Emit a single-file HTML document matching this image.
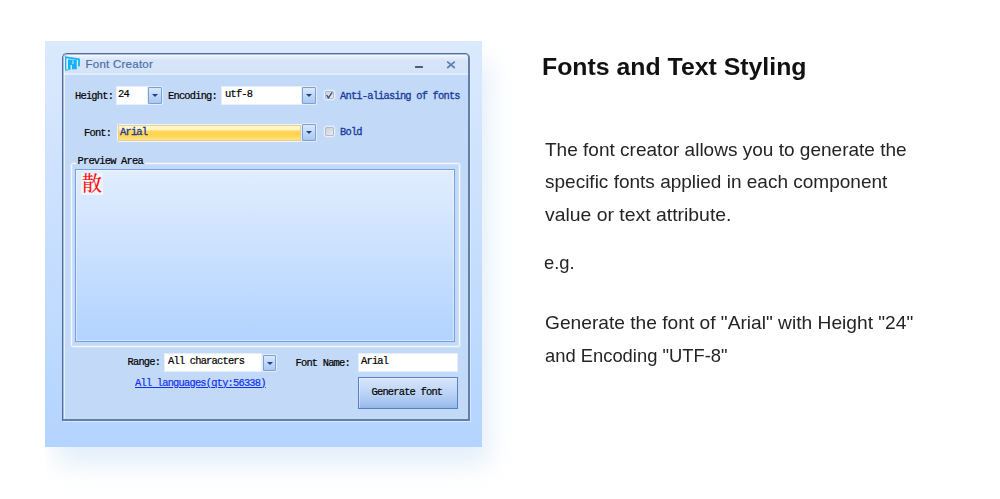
<!DOCTYPE html>
<html lang="en">
<head>
<meta charset="utf-8">
<title>Fonts and Text Styling</title>
<style>
html,body{margin:0;padding:0;background:#fff;}
body{width:1000px;height:499px;position:relative;overflow:hidden;font-family:"Liberation Sans",sans-serif;}
.abs{position:absolute;}
/* outer panel */
#shadow{left:56px;top:62px;width:433px;height:402px;background:#c6dff5;filter:blur(13px);opacity:.52;clip-path:inset(-60px -60px -60px -10px);}
#panel{left:45px;top:41px;width:437px;height:405.5px;background:linear-gradient(#dbe9fd,#b3d4ff);}
/* window */
#win{left:62px;top:53px;width:408px;height:368px;box-sizing:border-box;border-radius:5px 5px 0 0;background:#c3d9f8;overflow:hidden;}
#frame{left:62px;top:53px;width:408px;height:368px;box-sizing:border-box;border:solid #4f6c9b;border-width:1px 2px 2px 1px;border-color:#4f6c9b #627eaa #627eaa #4f6c9b;border-radius:5px 5px 0 0;box-shadow:1px 1px 0 rgba(226,238,253,.75),inset 1px 1px 0 rgba(79,108,155,.4),inset 2px 2px 0 rgba(240,246,254,.8);}
#title{left:0;top:0;width:408px;height:21.5px;background:linear-gradient(#fff 0,#fff 3px,#e4edfb 3.6px,#e1ebfb 5.5px,#d7e4f9 7px,#d5e3f9 19.5px,#e0edfd 20px,#e0edfd 21.5px);}
#ttext{left:85.5px;top:57px;letter-spacing:.25px;font-size:11.5px;line-height:14px;color:#4a6ea8;white-space:nowrap;-webkit-text-stroke:.2px #4a6ea8;}
.m{font-family:"Liberation Mono","DejaVu Sans Mono",monospace;font-size:10.4px;letter-spacing:-.79px;line-height:10px;white-space:nowrap;color:#000;-webkit-text-stroke:.2px currentColor;margin-top:-1px;}
.inp{background:#fff;border:1px solid #e6effb;box-sizing:border-box;}
.dd{box-sizing:border-box;box-shadow:0 0 0 1px rgba(228,238,251,.95);border:1px solid #7f9fd0;background:linear-gradient(#d9e8fb,#a9c8f2);border-radius:1px;}
.dd:after{content:"";position:absolute;left:2.5px;top:6px;border:3.5px solid transparent;border-top:3.5px solid #1b418f;border-bottom:0;}
.cb{box-sizing:border-box;width:11.6px;height:10.6px;border:1px solid #e9f0fa;border-radius:2.5px;box-shadow:0 0 0 .5px rgba(233,240,250,.6),inset 0 0 0 1px #aebace;background:linear-gradient(135deg,#c9ced8,#eceef2);}
/* right side */
#h1{left:541.5px;top:51.7px;font-weight:bold;font-size:23.5px;line-height:30px;color:#111;white-space:nowrap;transform-origin:0 0;transform:scaleX(1.057);}
.p{left:545px;font-size:18.2px;line-height:33px;color:#242424;white-space:nowrap;transform-origin:0 0;transform:scaleX(1.085);}
</style>
</head>
<body>
<div id="shadow" class="abs"></div>
<div id="panel" class="abs"></div>
<div id="win" class="abs">
  <div id="title" class="abs"></div>
</div>
<div id="frame" class="abs"></div>
<svg class="abs" style="left:64px;top:55px" width="18" height="17" viewBox="0 0 18 17">
  <path d="M1 1.2 L15.9 3.5 L15.9 11.3 L14.1 11.3 L14.1 4.9 L2.4 3.3 L2.4 14.4 L4 14.4 L4 15.5 L1 15.5 Z" fill="#10b4f6"/>
  <path d="M4 4.6 L12.8 5 L12.8 14.3 L8 14.3 L8 10 L6.5 10 L6.5 14.7 L4 14.7 Z" fill="#10b4f6"/>
  <rect x="8.4" y="5.4" width="1.1" height="3.6" fill="#bfe8fc"/>
  <rect x="2.4" y="3.9" width="1.6" height="10.5" fill="#d9f0fd" opacity=".55"/>
  <rect x="12.8" y="5" width="1.3" height="6.3" fill="#d9f0fd" opacity=".45"/>
</svg>
<div id="ttext" class="abs">Font Creator</div>
<div class="abs" style="left:414.5px;top:66px;width:8px;height:2px;background:#4b5c7c;border-radius:.5px"></div>
<svg class="abs" style="left:445px;top:59px" width="12" height="11" viewBox="0 0 12 11"><path d="M2.2 2.6 L9.8 9 M9.8 2.6 L2.2 9" fill="none" stroke="#5c7fb4" stroke-width="1.7"/></svg>

<!-- row 1 -->
<div class="abs m" style="left:75px;top:92px">Height:</div>
<div class="abs inp" style="left:116px;top:86px;width:32px;height:19px"></div>
<div class="abs m" style="left:118px;top:90px">24</div>
<div class="abs dd" style="left:148px;top:87px;width:14px;height:17px"></div>
<div class="abs m" style="left:168px;top:92px">Encoding:</div>
<div class="abs inp" style="left:221px;top:86px;width:81px;height:19px"></div>
<div class="abs m" style="left:225px;top:90px">utf-8</div>
<div class="abs dd" style="left:302px;top:87px;width:14px;height:17px"></div>
<div class="abs cb" style="left:323.6px;top:89.5px"></div>
<svg class="abs" style="left:324px;top:90px" width="11" height="11" viewBox="0 0 11 11"><path d="M2.6 5 L4.4 7.8 L8.2 2.4" fill="none" stroke="#2f4d8a" stroke-width="1.35"/></svg>
<div class="abs m" style="left:340px;top:92px;color:#17399a;-webkit-text-stroke:.3px #17399a">Anti-aliasing of fonts</div>

<!-- row 2 -->
<div class="abs m" style="left:84px;top:129px">Font:</div>
<div class="abs" style="left:117px;top:124px;width:185px;height:17.6px;box-sizing:border-box;border:1px solid #f6f4ec;border-radius:1.5px;box-shadow:inset 0 0 0 1px #e6cf98;background:linear-gradient(#fff7d4 0,#fff3c0 30%,#ffd75a 38%,#ffd34c 60%,#ffe78e 100%)"></div>
<div class="abs m" style="left:120px;top:128px;color:#17399a;-webkit-text-stroke:.3px #17399a">Arial</div>
<div class="abs dd" style="left:302px;top:124px;width:14px;height:17px"></div>
<div class="abs cb" style="left:323.6px;top:126px"></div>
<div class="abs m" style="left:340px;top:127.5px;color:#17399a;-webkit-text-stroke:.3px #17399a">Bold</div>

<!-- preview -->
<div class="abs" style="left:71px;top:162.5px;width:389px;height:184.5px;box-sizing:border-box;border:1px solid #f2f7fe;border-radius:2px;box-shadow:0 0 0 1px rgba(240,246,254,.3),inset 0 0 0 1px rgba(240,246,254,.25)"></div>
<div class="abs m" style="left:75.5px;top:157px;background:#c3d9f8;padding:0 2px">Preview Area</div>
<div class="abs" style="left:75px;top:169px;width:380px;height:173px;box-sizing:border-box;border:1px solid #76a0e0;box-shadow:inset 0 0 0 1px rgba(255,255,255,.4);background:linear-gradient(#e1edfe,#b1d3ff)"></div>
<div class="abs" style="left:81px;top:173px;width:22px;height:22px;background:#eef5fd"></div>
<div class="abs" style="left:82px;top:172px;font-family:'Liberation Serif','Noto Serif CJK SC','Noto Sans CJK SC',serif;font-size:20px;line-height:24px;color:#ff0000;-webkit-text-stroke:.15px #ff0000">散</div>

<!-- bottom -->
<div class="abs m" style="left:127.5px;top:358.1px">Range:</div>
<div class="abs inp" style="left:164px;top:353px;width:98px;height:19px"></div>
<div class="abs m" style="left:168px;top:357.3px">All characters</div>
<div class="abs dd" style="left:263px;top:354.5px;width:13px;height:16px"></div>
<div class="abs m" style="left:295.5px;top:358.7px">Font Name:</div>
<div class="abs inp" style="left:358px;top:353px;width:100px;height:18.5px"></div>
<div class="abs m" style="left:361px;top:357.2px">Arial</div>
<div class="abs m" style="left:135px;top:378.6px;color:#1030f0;text-decoration:underline">All languages(qty:56338)</div>
<div class="abs" style="left:358px;top:377px;width:100px;height:32px;box-sizing:border-box;border:1px solid #5680c2;box-shadow:inset 1px 1px 0 rgba(255,255,255,.4);background:linear-gradient(#d6e5fb 0,#c0d6f7 45%,#a2c1ee 88%,#95b6e8 100%)"></div>
<div class="abs m" style="left:371.5px;top:387.7px">Generate font</div>

<!-- right text -->
<div id="h1" class="abs">Fonts and Text Styling</div>
<div class="abs p" style="top:133.5px;transform:scaleX(1.046)">The font creator allows you to generate the</div>
<div class="abs p" style="top:166.3px;transform:scaleX(1.045)">specific fonts applied in each component</div>
<div class="abs p" style="top:198.7px;transform:scaleX(1.066)">value or text attribute.</div>
<div class="abs p" style="top:246.5px;left:543.5px;transform:scaleX(1.011)">e.g.</div>
<div class="abs p" style="top:307px;transform:scaleX(1.054)">Generate the font of "Arial" with Height "24"</div>
<div class="abs p" style="top:339.5px;transform:scaleX(1.010)">and Encoding "UTF-8"</div>
</body>
</html>
